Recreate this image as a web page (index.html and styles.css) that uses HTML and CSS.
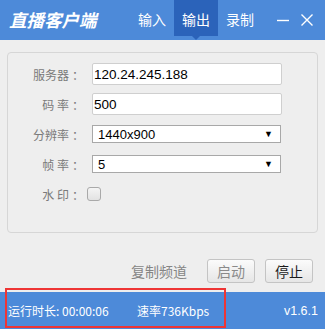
FILE: index.html
```html
<!DOCTYPE html>
<html lang="zh-CN">
<head>
    <meta charset="UTF-8">
    <title>直播客户端</title>
    <link rel="stylesheet" href="styles.css">
</head>
<body>
    <div class="app">
        <div class="titlebar">
            <div class="app-title">直播客户端</div>
            <div class="tabs">
                <div class="tab">输入</div>
                <div class="tab active">输出</div>
                <div class="tab">录制</div>
            </div>
            <div class="win-btns">
                <svg class="win-btn" width="14" height="14" viewBox="0 0 14 14"><path d="M1 7.5h12" stroke="#fff" stroke-width="1.4"/></svg>
                <svg class="win-btn" width="14" height="14" viewBox="0 0 14 14"><path d="M1.5 1.5l11 11M12.5 1.5l-11 11" stroke="#fff" stroke-width="1.4"/></svg>
            </div>
        </div>

        <div class="panel">
            <div class="form-row">
                <label class="form-label">服务器<span class="colon">：</span></label>
                <input class="text-input" type="text" value="120.24.245.188">
            </div>
            <div class="form-row">
                <label class="form-label">码 率<span class="colon">：</span></label>
                <input class="text-input" type="text" value="500">
            </div>
            <div class="form-row">
                <label class="form-label">分辨率<span class="colon">：</span></label>
                <div class="select-box"><span>1440x900</span><span class="arrow">▼</span></div>
            </div>
            <div class="form-row">
                <label class="form-label">帧 率<span class="colon">：</span></label>
                <div class="select-box"><span>5</span><span class="arrow">▼</span></div>
            </div>
            <div class="form-row">
                <label class="form-label">水 印<span class="colon">：</span></label>
                <span class="check-box"></span>
            </div>
        </div>

        <div class="actions">
            <span class="copy-link">复制频道</span>
            <button class="btn disabled">启动</button>
            <button class="btn">停止</button>
        </div>

        <div class="statusbar">
            <span class="stat-time">运行时长: 00:00:06</span>
            <span class="stat-rate">速率736Kbps</span>
            <span class="version">v1.6.1</span>
            <div class="highlight"></div>
        </div>
    </div>
</body>
</html>
```

FILE: styles.css
```css
* {
    margin: 0;
    padding: 0;
    box-sizing: border-box;
}
body {
    width: 325px;
    height: 329px;
    background: #eeeeee;
    font-family: "Noto Sans CJK SC", "Liberation Sans", sans-serif;
    overflow: hidden;
}
.app {
    height: 329px;
    display: flex;
    flex-direction: column;
}
.titlebar {
    height: 40px;
    background: #4d8ad9;
    display: flex;
    align-items: flex-start;
    color: #fff;
}
.app-title {
    height: 40px;
    line-height: 40px;
    padding-left: 9px;
    width: 130px;
    font-size: 17.5px;
    font-weight: bold;
    font-style: italic;
}
.tabs {
    display: flex;
}
.tab {
    position: relative;
    width: 44px;
    height: 36px;
    line-height: 39px;
    text-align: center;
    font-size: 14px;
}
.tab.active {
    background: #2b63ba;
}
.tab.active::after {
    content: "";
    position: absolute;
    left: 18px;
    top: 36px;
    border-left: 4px solid transparent;
    border-right: 4px solid transparent;
    border-top: 4px solid #2b63ba;
}
.win-btns {
    display: flex;
    gap: 10px;
    margin-left: 14px;
    height: 40px;
    align-items: center;
    padding-bottom: 1px;
}
.panel {
    margin: 12px 7px 0 7px;
    height: 181px;
    border: 1px solid #d6d6d6;
    border-radius: 4px;
    padding-top: 6px;
}
.form-row {
    height: 30px;
    display: flex;
    align-items: center;
}
.form-label {
    width: 76px;
    text-align: right;
    font-size: 12px;
    color: #7a7a7a;
    margin-right: 8px;
}
.colon {
    padding-left: 3px;
}
.text-input {
    width: 190px;
    height: 22px;
    border: 1px solid #cfcfcf;
    border-radius: 2px;
    background: #fff;
    font-family: "Liberation Sans", sans-serif;
    font-size: 13.5px;
    color: #000;
    padding: 0 1px;
    outline: none;
}
.select-box {
    width: 189px;
    height: 18px;
    border: 1px solid #a8a8a8;
    background: #fff;
    display: flex;
    align-items: center;
    justify-content: space-between;
    padding: 0 7px 0 5px;
    font-family: "Liberation Sans", sans-serif;
    font-size: 13px;
    color: #000;
}
.arrow {
    font-size: 9px;
}
.check-box {
    width: 14px;
    height: 14px;
    margin-left: -5px;
    border: 1px solid #a9a9a9;
    border-radius: 3px;
    background: linear-gradient(#f4f4f4, #e2e2e2);
}
.actions {
    display: flex;
    align-items: center;
    justify-content: flex-end;
    margin-top: 26px;
    padding-right: 12px;
    height: 24px;
}
.copy-link {
    font-size: 14px;
    color: #858585;
    margin-right: 10px;
}
.btn {
    width: 48px;
    height: 24px;
    border: 1px solid #c4c4c4;
    border-radius: 3px;
    background: linear-gradient(#fbfbfb, #e6e6e6);
    font-family: "Noto Sans CJK SC", sans-serif;
    font-size: 14px;
    color: #1a1a1a;
    margin-left: 10px;
}
.btn.disabled {
    color: #8a8a8a;
}
.statusbar {
    position: relative;
    margin-top: auto;
    height: 37px;
    background: #4d8ad9;
    color: #fff;
    font-size: 12px;
    display: flex;
    align-items: center;
    padding: 0 7px 0 8px;
}
.stat-time {
    width: 129px;
}
.version {
    margin-left: auto;
    font-family: "Liberation Sans", sans-serif;
    font-size: 12.5px;
}
.highlight {
    position: absolute;
    left: 5px;
    top: -4px;
    width: 221px;
    height: 40px;
    border: 2.5px solid #ee3535;
}
```
